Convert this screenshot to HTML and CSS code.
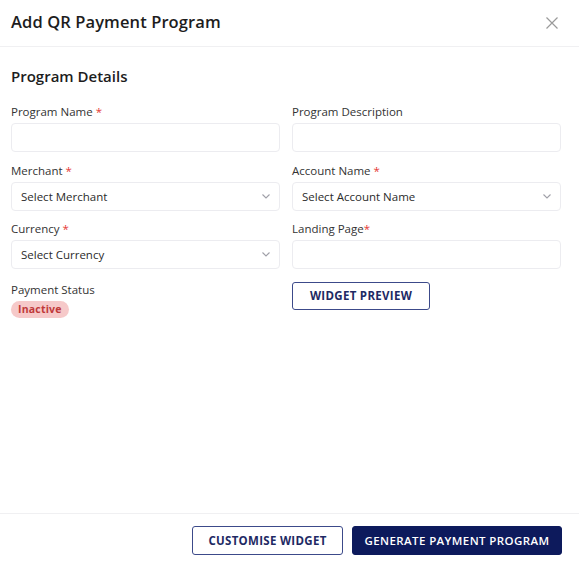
FILE: index.html
```html
<!DOCTYPE html>
<html>
<head>
<meta charset="utf-8">
<link rel="stylesheet" href="styles.css">
</head>
<body>
<div class="modal">
  <div class="header">
    <h1 class="title">Add QR Payment Program</h1>
    <svg class="close" width="12" height="12" viewBox="0 0 12 12"><path d="M0.5 0.5L11.5 11.5M11.5 0.5L0.5 11.5" stroke="#9a9a9a" stroke-width="1.2" fill="none"/></svg>
  </div>
  <div class="content">
    <h2 class="section">Program Details</h2>
    <div class="grid">
      <div class="field">
        <label class="label">Program Name <span class="req">*</span></label>
        <div class="input"></div>
      </div>
      <div class="field">
        <label class="label">Program Description</label>
        <div class="input"></div>
      </div>
      <div class="field">
        <label class="label">Merchant <span class="req">*</span></label>
        <div class="input select"><span>Select Merchant</span><svg class="chev" width="8" height="5" viewBox="0 0 8 5"><path d="M0.5 0.5L4 4L7.5 0.5" stroke="#a0a0a8" stroke-width="1.1" fill="none"/></svg></div>
      </div>
      <div class="field">
        <label class="label">Account Name <span class="req">*</span></label>
        <div class="input select"><span>Select Account Name</span><svg class="chev" width="8" height="5" viewBox="0 0 8 5"><path d="M0.5 0.5L4 4L7.5 0.5" stroke="#a0a0a8" stroke-width="1.1" fill="none"/></svg></div>
      </div>
      <div class="field">
        <label class="label">Currency <span class="req">*</span></label>
        <div class="input select"><span>Select Currency</span><svg class="chev" width="8" height="5" viewBox="0 0 8 5"><path d="M0.5 0.5L4 4L7.5 0.5" stroke="#a0a0a8" stroke-width="1.1" fill="none"/></svg></div>
      </div>
      <div class="field">
        <label class="label">Landing Page<span class="req">*</span></label>
        <div class="input"></div>
      </div>
      <div class="field field-last">
        <label class="label">Payment Status</label>
        <span class="badge">Inactive</span>
      </div>
      <div class="field field-last">
        <button class="btn btn-outline btn-preview">WIDGET PREVIEW</button>
      </div>
    </div>
  </div>
  <div class="footer">
    <button class="btn btn-outline btn-custom">CUSTOMISE WIDGET</button>
    <button class="btn btn-solid">GENERATE PAYMENT PROGRAM</button>
  </div>
</div>
</body>
</html>
```

FILE: styles.css
```css
* { box-sizing: border-box; }
html, body { margin: 0; padding: 0; background: #fff; }
body {
  font-family: "Open Sans", "Noto Sans", sans-serif;
  color: #2b2b2b;
  width: 579px;
  height: 564px;
  overflow: hidden;
}
.modal {
  display: flex;
  flex-direction: column;
  height: 564px;
}
.header {
  height: 47px;
  display: flex;
  align-items: center;
  justify-content: space-between;
  padding: 0 21px 4px 11px;
  border-bottom: 1px solid #f0f0f2;
}
.title {
  margin: 0;
  font-size: 16.5px;
  font-weight: 600;
  color: #1d1d1d;
  letter-spacing: 0.1px;
}
.close { display: block; margin-top: 4px; }
.content {
  flex: 1;
  padding: 19px 18px 0 11px;
}
.section {
  margin: 0 0 18px;
  font-size: 15px;
  font-weight: 600;
  color: #1d1d1d;
  line-height: 20px;
}
.grid {
  display: grid;
  grid-template-columns: 269px 269px;
  column-gap: 12px;
  row-gap: 10.5px;
}
.field { display: flex; flex-direction: column; align-items: flex-start; }
.field-last { margin-top: 2px; }
.label {
  font-size: 11.5px;
  line-height: 16px;
  color: #333;
  margin-bottom: 3px;
}
.req { color: #e53935; }
.input {
  width: 100%;
  height: 29px;
  border: 1px solid #ececf0;
  border-radius: 4px;
  background: #fff;
}
.select {
  display: flex;
  align-items: center;
  justify-content: space-between;
  padding: 0 9px 0 9px;
  font-size: 11.5px;
  color: #2b2b2b;
}
.chev { display: block; }
.badge {
  display: inline-block;
  margin-top: 0;
  height: 17px;
  line-height: 17px;
  padding: 0 7px;
  border-radius: 9px;
  background: #f6c9c9;
  color: #c0393a;
  font-size: 10.5px;
  font-weight: 700;
  letter-spacing: 0.2px;
}
.btn {
  font-family: inherit;
  font-weight: 700;
  font-size: 11.5px;
  border-radius: 3px;
  cursor: pointer;
  letter-spacing: 0.3px;
}
.btn-outline {
  background: #fff;
  border: 1.5px solid #3c4a8a;
  color: #1e2a64;
}
.btn-preview {
  width: 138px;
  height: 28px;
  margin-top: 0;
}
.footer {
  height: 51px;
  border-top: 1px solid #f0f0f2;
  display: flex;
  justify-content: flex-end;
  align-items: flex-start;
  gap: 9px;
  padding: 12px 17px 0 0;
}
.btn-custom { width: 151px; height: 29px; }
.btn-solid {
  width: 210px;
  height: 29px;
  background: #0d1a5c;
  border: 1px solid #0d1a5c;
  color: #fff;
  font-weight: 600;
  letter-spacing: 0.4px;
}
```
